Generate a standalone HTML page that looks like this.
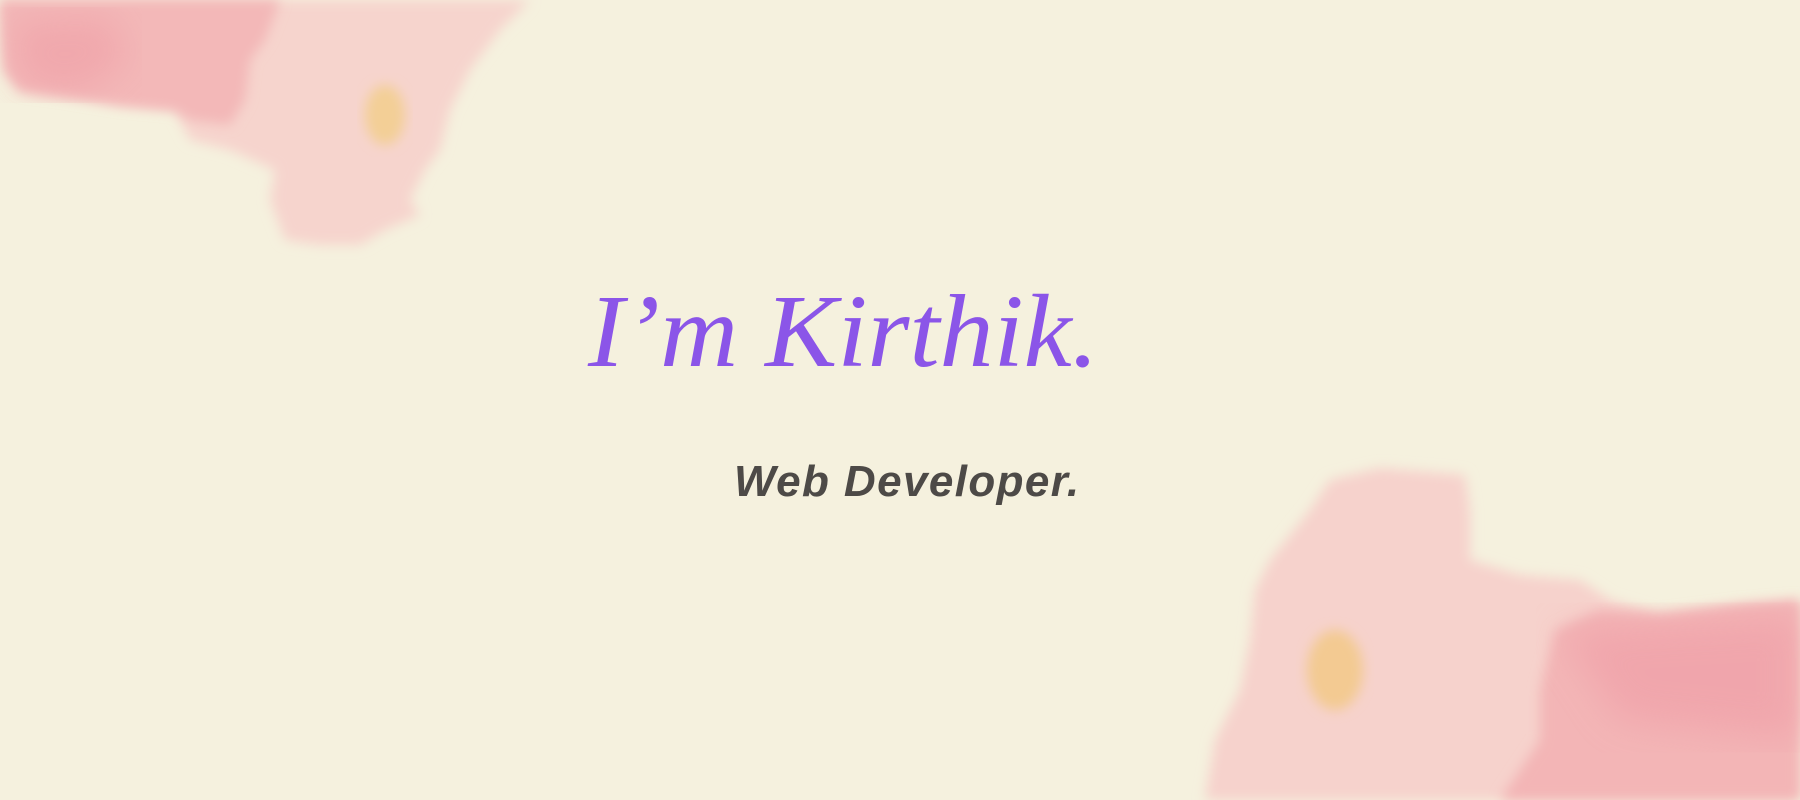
<!DOCTYPE html>
<html><head><meta charset="utf-8"><style>
html,body{margin:0;padding:0;}
body{width:1800px;height:800px;background:#f5f1de;position:relative;overflow:hidden;font-family:"Liberation Sans",sans-serif;}
svg{position:absolute;left:0;top:0;}
.t1{position:absolute;left:588px;top:272px;font-family:"Liberation Serif",serif;font-style:italic;font-size:104px;color:#8b55e8;letter-spacing:0px;white-space:nowrap;transform:scaleX(1.04);transform-origin:left top;}
.t2{position:absolute;left:734px;top:457px;font-weight:bold;font-style:italic;font-size:44px;color:#4d4a47;white-space:nowrap;letter-spacing:1.4px;}
</style></head><body>
<svg width="1800" height="800" viewBox="0 0 1800 800">
<defs>
<filter id="b" x="-20%" y="-20%" width="140%" height="140%"><feGaussianBlur stdDeviation="6"/></filter>
<filter id="b2"><feGaussianBlur stdDeviation="18"/></filter>
</defs>
<path d="M0 0 L530 0 L500 30 L470 70 L450 110 L440 150 L425 170 L410 200 L420 215 L385 230 L360 245 L320 245 L285 240 L270 200 L275 170 L230 150 L190 140 L175 110 L120 105 L60 95 L20 90 L5 70 Z" fill="#f6d4cd" filter="url(#b)"/>
<path d="M0 0 L280 0 L265 40 L250 60 L245 100 L230 125 L190 120 L175 110 L120 105 L60 95 L20 90 L5 70 Z" fill="#f3b8b8" filter="url(#b)"/>
<path d="M10 20 L110 15 L130 60 L80 95 L20 85 Z" fill="#ef9ea6" filter="url(#b2)" opacity="0.6"/>
<ellipse cx="385" cy="115" rx="20" ry="30" fill="#f3cf96" filter="url(#b)"/>
<path d="M1800 800 L1205 800 L1215 740 L1240 690 L1250 640 L1255 590 L1270 560 L1290 535 L1310 510 L1330 480 L1380 468 L1465 475 L1470 510 L1470 560 L1520 575 L1580 580 L1610 600 L1660 615 L1740 605 L1800 600 Z" fill="#f6d2cc" filter="url(#b)"/>
<path d="M1800 800 L1500 800 L1540 740 L1540 690 L1555 630 L1600 610 L1660 615 L1740 605 L1800 600 Z" fill="#f3b5b6" filter="url(#b)"/>
<path d="M1560 630 L1800 615 L1800 740 L1620 720 Z" fill="#ef9ca6" filter="url(#b2)" opacity="0.6"/>
<ellipse cx="1335" cy="670" rx="28" ry="40" fill="#f3ca92" filter="url(#b)"/>
</svg>
<div class="t1">I’m Kirthik.</div>
<div class="t2">Web Developer.</div>
</body></html>
